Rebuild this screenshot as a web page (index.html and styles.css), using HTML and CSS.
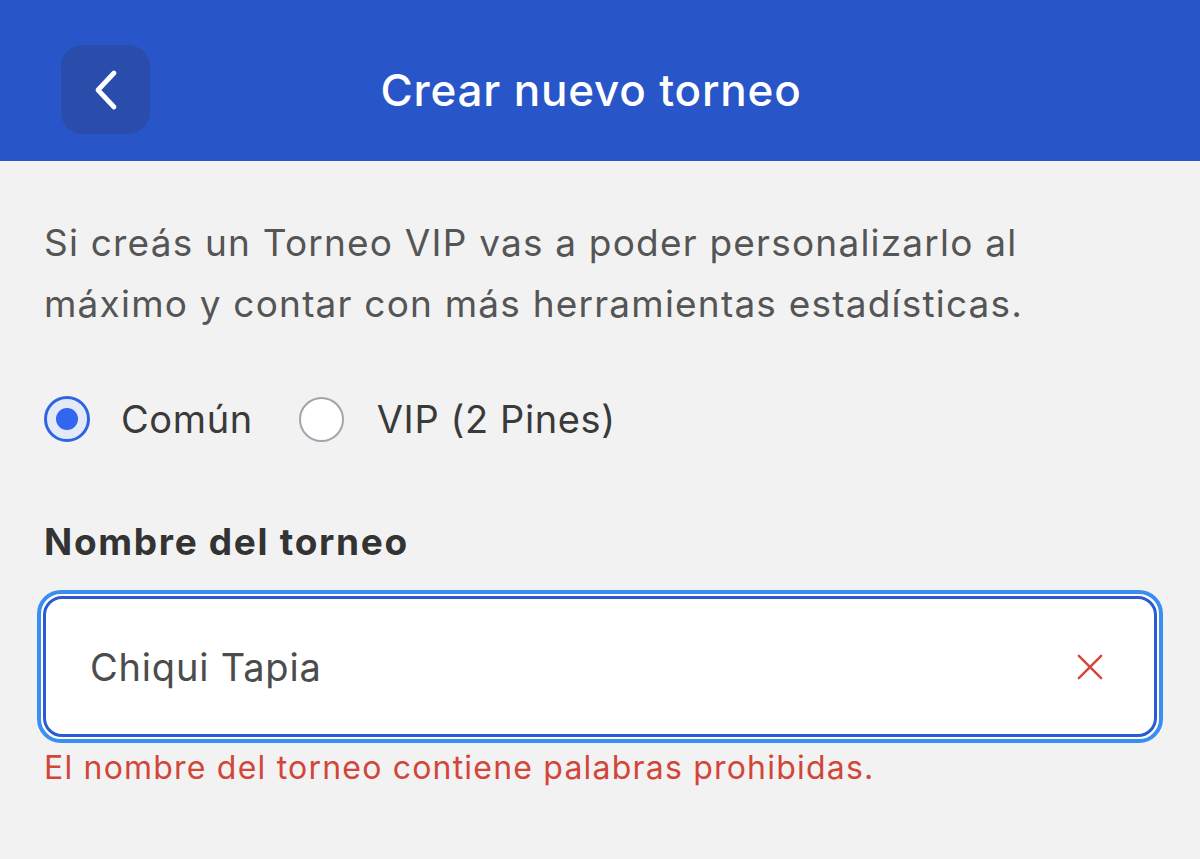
FILE: index.html
```html
<!DOCTYPE html>
<html lang="es">
<head>
    <meta charset="UTF-8">
    <title>Crear nuevo torneo</title>
    <link rel="stylesheet" href="styles.css">
</head>
<body>
    <!-- Top bar -->
    <header class="topbar">
        <button class="back-btn" aria-label="Volver">
            <svg width="28" height="42" viewBox="0 0 28 42">
                <path d="M22 4 L6 21 L22 38" fill="none" stroke="#fff" stroke-width="4.8" stroke-linecap="round" stroke-linejoin="round"/>
            </svg>
        </button>
        <h1 class="title">Crear nuevo torneo</h1>
    </header>

    <main class="content">
        <p class="intro">Si creás un Torneo VIP vas a poder personalizarlo al máximo y contar con más herramientas estadísticas.</p>

        <div class="radios">
            <label class="radio">
                <span class="dot checked"></span>
                Común
            </label>
            <label class="radio">
                <span class="dot"></span>
                VIP (2 Pines)
            </label>
        </div>

        <div class="field-label">Nombre del torneo</div>
        <div class="input-ring">
            <div class="input-box">
                <span class="input-text">Chiqui Tapia</span>
                <svg class="clear" width="28" height="28" viewBox="0 0 28 28">
                    <path d="M2 2 L26 26 M26 2 L2 26" stroke="#d2463a" stroke-width="2.6" stroke-linecap="round"/>
                </svg>
            </div>
        </div>
        <div class="error">El nombre del torneo contiene palabras prohibidas.</div>
    </main>
</body>
</html>
```

FILE: styles.css
```css
html, body {
    margin: 0;
    padding: 0;
    height: 100%;
    background: #f2f2f2;
    font-family: 'Inter', 'Noto Sans', sans-serif;
}

/* Header */
.topbar {
    height: 161px;
    background: #2855c8;
    display: flex;
    align-items: center;
    padding: 18px 0 0 61px;
    box-sizing: border-box;
}

.back-btn {
    width: 89px;
    height: 89px;
    border: none;
    border-radius: 22px;
    background: #2a4caa;
    display: flex;
    align-items: center;
    justify-content: center;
    padding: 0;
}

.title {
    flex: 1;
    margin: 0;
    text-align: center;
    color: #fff;
    font-size: 44px;
    font-weight: 500;
    letter-spacing: 0.8px;
    padding-right: 168px;
}

/* Content */
.content {
    padding: 0 37px 0 44px;
}

.intro {
    margin: 0;
    max-width: 1000px;
    padding-top: 51px;
    font-size: 37px;
    line-height: 61px;
    color: #555;
    letter-spacing: 1.2px;
}

.radios {
    display: flex;
    align-items: center;
    margin-top: 57px;
    height: 56px;
}

.radio {
    display: flex;
    align-items: center;
    font-size: 38px;
    color: #3a3a3a;
    margin-right: 46px;
    letter-spacing: 0.6px;
}

.dot {
    width: 41px;
    height: 41px;
    border-radius: 50%;
    border: 2.5px solid #a5a3ad;
    background: #fff;
    margin-right: 33px;
    display: flex;
    align-items: center;
    justify-content: center;
}

.dot.checked {
    border: 3px solid #2f63e6;
    width: 40px;
    height: 40px;
    background: #e4e9f7;
    margin-right: 31px;
}

.dot.checked::after {
    content: "";
    width: 22px;
    height: 22px;
    border-radius: 50%;
    background: #3366f0;
}

.field-label {
    margin-top: 72px;
    font-size: 37px;
    font-weight: 700;
    color: #333;
    letter-spacing: 1.7px;
}

/* Focused input with double ring */
.input-ring {
    margin: 26px 0 0 -7px;
    border: 4px solid #3a8ef2;
    border-radius: 24px;
    padding: 2px;
    background: #fff;
}

.input-box {
    height: 135px;
    border: 3px solid #2b5bd3;
    border-radius: 19px;
    display: flex;
    align-items: center;
    justify-content: space-between;
    padding: 0 51px 0 44px;
    background: #fff;
}

.input-text {
    font-size: 38px;
    color: #4c4c4c;
    letter-spacing: 0.8px;
}

.clear {
    width: 26px;
    height: 26px;
}

.error {
    margin-top: 5px;
    font-size: 32px;
    color: #d2463a;
    letter-spacing: 1.2px;
}
```
